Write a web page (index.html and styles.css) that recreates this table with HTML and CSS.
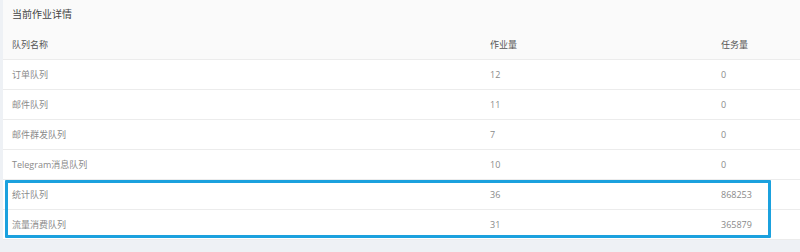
FILE: index.html
```html
<!DOCTYPE html>
<html lang="zh-CN">
<head>
<meta charset="utf-8">
<title>当前作业详情</title>
<link rel="stylesheet" href="styles.css">
</head>
<body>
<div class="card">
  <div class="card-title">当前作业详情</div>
  <div class="table">
    <div class="row head">
      <div class="cell">队列名称</div>
      <div class="cell">作业量</div>
      <div class="cell">任务量</div>
    </div>
    <div class="row">
      <div class="cell">订单队列</div>
      <div class="cell">12</div>
      <div class="cell">0</div>
    </div>
    <div class="row">
      <div class="cell">邮件队列</div>
      <div class="cell">11</div>
      <div class="cell">0</div>
    </div>
    <div class="row">
      <div class="cell">邮件群发队列</div>
      <div class="cell">7</div>
      <div class="cell">0</div>
    </div>
    <div class="row">
      <div class="cell">Telegram消息队列</div>
      <div class="cell">10</div>
      <div class="cell">0</div>
    </div>
    <div class="group">
      <div class="row">
        <div class="cell">统计队列</div>
        <div class="cell">36</div>
        <div class="cell">868253</div>
      </div>
      <div class="row">
        <div class="cell">流量消费队列</div>
        <div class="cell">31</div>
        <div class="cell">365879</div>
      </div>
      <div class="highlight"></div>
    </div>
  </div>
</div>
</body>
</html>
```

FILE: styles.css
```css
html, body {
  margin: 0;
  padding: 0;
}
body {
  background: #eef1f5;
  font-family: "Open Sans", "Noto Sans CJK SC", sans-serif;
  height: 252px;
  overflow: hidden;
}
.card {
  margin-left: 3px;
  background: #ffffff;
}
.card-title {
  height: 30px;
  line-height: 29px;
  padding-left: 9px;
  font-size: 10px;
  color: #444;
  background: #fafafa;
}
.table {
  display: flex;
  flex-direction: column;
}
.group {
  position: relative;
}
.row {
  display: grid;
  grid-template-columns: 478px 231px 1fr;
  height: 29px;
  align-items: center;
  border-bottom: 1px solid #ececec;
  font-size: 9px;
  color: #8a8a8a;
}
.row.head {
  background: #fafafa;
  color: #555;
}
.cell {
  padding-left: 9px;
}
.highlight {
  position: absolute;
  left: 2px;
  top: 0;
  width: 760px;
  height: 52px;
  border: 3px solid #1ba1de;
  border-radius: 1px;
  pointer-events: none;
}
```
